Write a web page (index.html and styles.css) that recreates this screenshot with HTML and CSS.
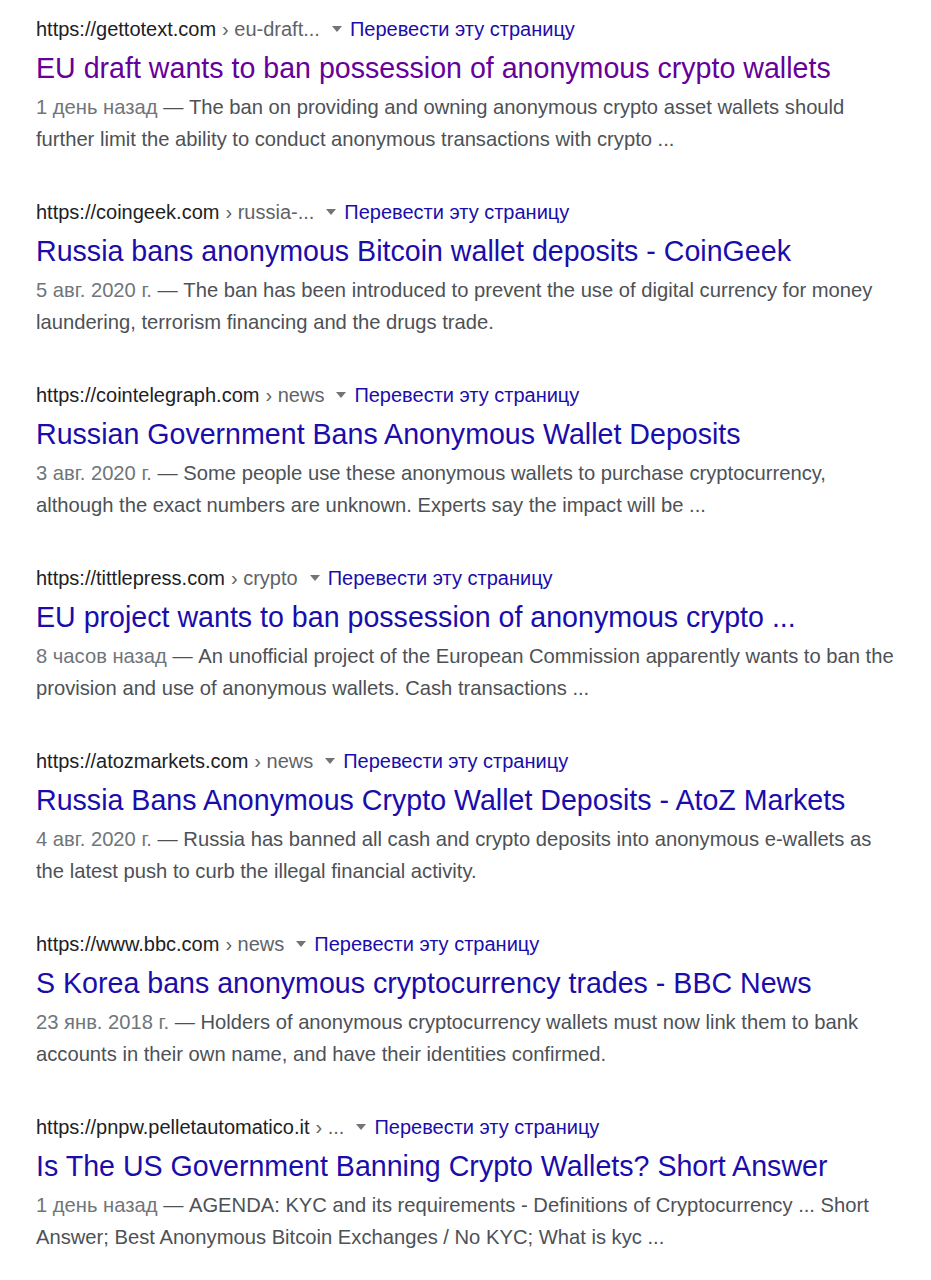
FILE: index.html
```html
<!DOCTYPE html>
<html lang="ru">
<head>
<meta charset="utf-8">
<title>Results</title>
<link rel="stylesheet" href="styles.css">
</head>
<body>
<div class="results">
  <div class="result">
    <div class="cite"><span class="host">https://gettotext.com</span><span class="path">› eu-draft...</span><svg class="caret" width="10" height="6" viewBox="0 0 10 6"><polygon points="0,0 10,0 5,6"/></svg><span class="translate">Перевести эту страницу</span></div>
    <div class="title visited">EU draft wants to ban possession of anonymous crypto wallets</div>
    <div class="snippet"><span class="date">1 день назад</span> — The ban on providing and owning anonymous crypto asset wallets should further limit the ability to conduct anonymous transactions with crypto ...</div>
  </div>
  <div class="result">
    <div class="cite"><span class="host">https://coingeek.com</span><span class="path">› russia-...</span><svg class="caret" width="10" height="6" viewBox="0 0 10 6"><polygon points="0,0 10,0 5,6"/></svg><span class="translate">Перевести эту страницу</span></div>
    <div class="title">Russia bans anonymous Bitcoin wallet deposits - CoinGeek</div>
    <div class="snippet"><span class="date">5 авг. 2020 г.</span> — The ban has been introduced to prevent the use of digital currency for money laundering, terrorism financing and the drugs trade.</div>
  </div>
  <div class="result">
    <div class="cite"><span class="host">https://cointelegraph.com</span><span class="path">› news</span><svg class="caret" width="10" height="6" viewBox="0 0 10 6"><polygon points="0,0 10,0 5,6"/></svg><span class="translate">Перевести эту страницу</span></div>
    <div class="title">Russian Government Bans Anonymous Wallet Deposits</div>
    <div class="snippet"><span class="date">3 авг. 2020 г.</span> — Some people use these anonymous wallets to purchase cryptocurrency, although the exact numbers are unknown. Experts say the impact will be ...</div>
  </div>
  <div class="result">
    <div class="cite"><span class="host">https://tittlepress.com</span><span class="path">› crypto</span><svg class="caret" width="10" height="6" viewBox="0 0 10 6"><polygon points="0,0 10,0 5,6"/></svg><span class="translate">Перевести эту страницу</span></div>
    <div class="title">EU project wants to ban possession of anonymous crypto ...</div>
    <div class="snippet"><span class="date">8 часов назад</span> — An unofficial project of the European Commission apparently wants to ban the provision and use of anonymous wallets. Cash transactions ...</div>
  </div>
  <div class="result">
    <div class="cite"><span class="host">https://atozmarkets.com</span><span class="path">› news</span><svg class="caret" width="10" height="6" viewBox="0 0 10 6"><polygon points="0,0 10,0 5,6"/></svg><span class="translate">Перевести эту страницу</span></div>
    <div class="title">Russia Bans Anonymous Crypto Wallet Deposits - AtoZ Markets</div>
    <div class="snippet"><span class="date">4 авг. 2020 г.</span> — Russia has banned all cash and crypto deposits into anonymous e-wallets as the latest push to curb the illegal financial activity.</div>
  </div>
  <div class="result">
    <div class="cite"><span class="host">https://www.bbc.com</span><span class="path">› news</span><svg class="caret" width="10" height="6" viewBox="0 0 10 6"><polygon points="0,0 10,0 5,6"/></svg><span class="translate">Перевести эту страницу</span></div>
    <div class="title">S Korea bans anonymous cryptocurrency trades - BBC News</div>
    <div class="snippet"><span class="date">23 янв. 2018 г.</span> — Holders of anonymous cryptocurrency wallets must now link them to bank accounts in their own name, and have their identities confirmed.</div>
  </div>
  <div class="result">
    <div class="cite"><span class="host">https://pnpw.pelletautomatico.it</span><span class="path">› ...</span><svg class="caret" width="10" height="6" viewBox="0 0 10 6"><polygon points="0,0 10,0 5,6"/></svg><span class="translate">Перевести эту страницу</span></div>
    <div class="title">Is The US Government Banning Crypto Wallets? Short Answer</div>
    <div class="snippet"><span class="date">1 день назад</span> — AGENDA: KYC and its requirements - Definitions of Cryptocurrency ... Short Answer; Best Anonymous Bitcoin Exchanges / No KYC; What is kyc ...</div>
  </div>
</div>
</body>
</html>
```
FILE: styles.css
```css
html, body {
  margin: 0;
  padding: 0;
  background: #ffffff;
}
body {
  font-family: "Liberation Sans", Arial, sans-serif;
}
.results {
  padding: 15px 0 0 36px;
  width: 860px;
}
.result {
  margin-bottom: 43px;
}
.cite {
  display: flex;
  align-items: center;
  font-size: 20px;
  line-height: 28px;
  height: 28px;
  white-space: nowrap;
}
.host {
  color: #202124;
}
.path {
  color: #5f6368;
  margin-left: 6px;
}
.caret {
  fill: #70757a;
  margin: 0 8px 0 12px;
}
.translate {
  color: #1a0dab;
}
.title {
  margin-top: 3px;
  font-size: 28.6px;
  line-height: 45px;
  color: #1a0dab;
  white-space: nowrap;
}
.title.visited {
  color: #660099;
}
.snippet {
  font-size: 20.2px;
  line-height: 32px;
  color: #4d5156;
}
.date {
  color: #70757a;
}
```
